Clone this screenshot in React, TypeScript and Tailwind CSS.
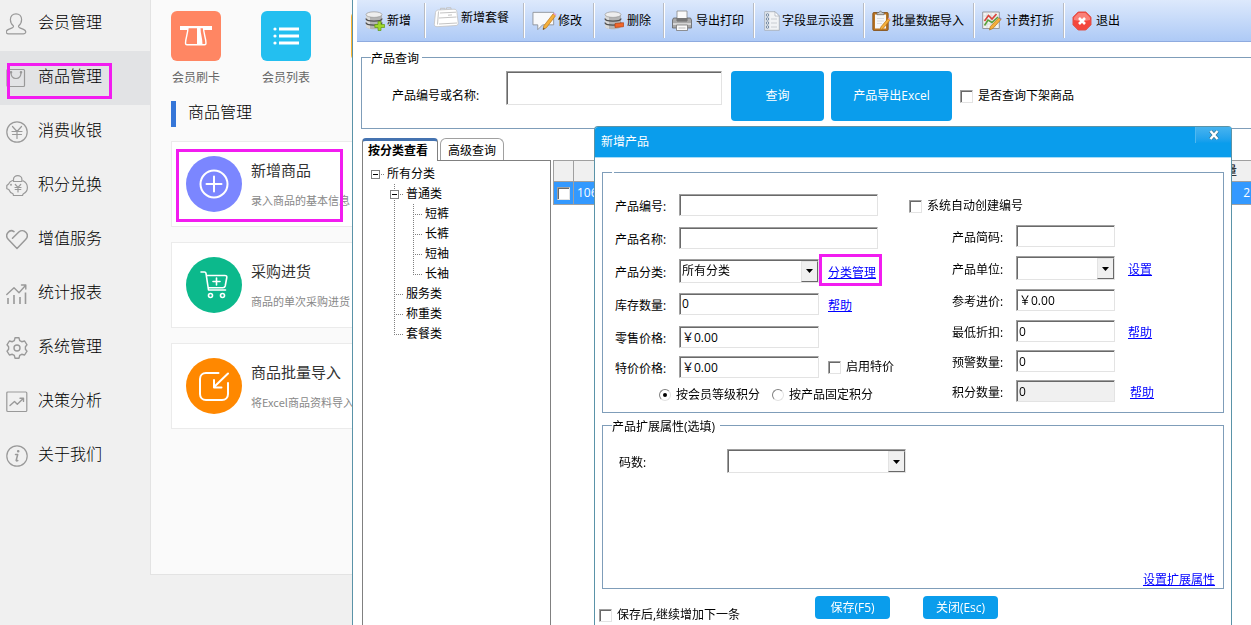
import { useState } from "react";
import type { InputHTMLAttributes, ReactNode, SelectHTMLAttributes } from "react";
import clsx from "clsx";

const INSET =
  "border border-t-[#a0a0a0] border-l-[#a0a0a0] border-r-[#e3e3e3] border-b-[#e3e3e3] shadow-[inset_1px_1px_0_#696969] outline-none";

/* ---------- side menu icons ---------- */

function LineIcon({ children }: { children: ReactNode }) {
  return (
    <svg viewBox="0 0 22 22" className="size-[22px] shrink-0" fill="none" stroke="#999" strokeWidth="1.2" strokeLinecap="round" strokeLinejoin="round" aria-hidden="true">
      {children}
    </svg>
  );
}

const menu = [
  {
    label: "会员管理",
    icon: (
      <path d="M10 .8c3.4 0 5.6 2.400 5.600 5.800 0 2.700-1.300 5-2.900 6.200-.4 1 .1 1.700 1.100 2.100l3.700 1.500c1.700.8 2.500 2.200 2.100 3.200-.3.800-1.200 1.200-2.200 1.200H2.600c-1 0-1.900-.4-2.200-1.200-.4-1 .4-2.400 2.100-3.200l3.700-1.500c1-.4 1.500-1.100 1.100-2.100C5.700 11.600 4.400 9.300 4.400 6.600 4.400 3.200 6.600.8 10 .8z" />
    ),
  },
  {
    label: "商品管理",
    icon: (
      <>
        <rect x="1" y="2.500" width="17.500" height="17" rx="1" />
        <path d="M5 5.500c0 4 2 6 5 6s5-2 5-6" />
        <circle cx="5" cy="5.200" r=".7" />
        <circle cx="15" cy="5.200" r=".7" />
      </>
    ),
  },
  {
    label: "消费收银",
    icon: (
      <>
        <circle cx="11" cy="11" r="10.200" />
        <path d="M6.500 5.500l4.500 5 4.500-5M6 10.500h10M6.500 13.500h9M11 10.500V17.500" />
      </>
    ),
  },
  {
    label: "积分兑换",
    icon: (
      <>
        <path d="M6.500 5.500C4.500 6.300 3.200 7.500 2.600 9L.8 10.500v3.200l2 .8c.7 2 2.200 3.500 4.200 4.300l.5 1.700h9l.6-1.500c2.700-1.300 4.300-3.700 4.300-6.500 0-3-1.700-5.500-4.400-6.800" />
        <path d="M7.500 6.500V4.200a4.200 3.600 0 018.400 0v2.300zM9.300 9.500l2.700 2.800 2.700-2.800M9 12.500h6M9.200 14.500h5.600M12 12.300v4.700" />
        <circle cx="5" cy="9.800" r=".4" />
      </>
    ),
  },
  {
    label: "增值服务",
    icon: (
      <path d="M8 2.600c-2-1.400-4.500-1-6 .8-1.800 2.200-1.500 5.200.4 7.200L11 19.500l8.600-8.900c1.900-2 2.200-5 .4-7.200-1.900-2.100-5-2.300-7.200-.4L6.500 9.200" strokeWidth="1.500" />
    ),
  },
  {
    label: "统计报表",
    icon: (
      <>
        <path d="M.8 11.500L8 4.800l5 5L19.500 2.500M15.500 2h4.300v4" strokeWidth="1.400" />
        <path d="M2 15v6M8 12v9M14 14v7M19.500 9.500V21" strokeWidth="1.600" strokeLinecap="butt" />
      </>
    ),
  },
  {
    label: "系统管理",
    icon: (
      <>
        <path d="M9 .8h4l.7 2.800 2 1.100 2.900-.7 2.400 3.800-1.600 1.900v2.600l1.600 1.900-2.400 3.800-2.900-.7-2 1.100-.7 2.800H9l-.7-2.800-2-1.100-2.900.7L1 14.200l1.600-1.900V9.700L1 7.800 3.400 4l2.900.7 2-1.100z" strokeWidth="1.400" />
        <circle cx="11" cy="11" r="3" strokeWidth="1.400" />
      </>
    ),
  },
  {
    label: "决策分析",
    icon: (
      <>
        <rect x=".8" y="1" width="20" height="19.500" rx="1" />
        <path d="M4 14.500l4.500-4 2.800 2.800L17 7.800M14 7.200h3.500v3.200" strokeWidth="1.400" />
      </>
    ),
  },
  {
    label: "关于我们",
    icon: (
      <>
        <circle cx="11" cy="11" r="10.200" />
        <path d="M9.500 9.500h2.200l-1.500 5.800c-.1.700.5.800 1.600.2" strokeWidth="1.500" />
        <circle cx="12.200" cy="6.300" r=".7" fill="#999" />
      </>
    ),
  },
];

/* ---------- toolbar icons ---------- */

function Database({ badge }: { badge: "add" | "remove" }) {
  return (
    <svg viewBox="0 0 20 20" className="size-5 shrink-0" aria-hidden="true">
      <path d="M1 3.500v12c0 1.500 3.500 2.700 8 2.700s8-1.200 8-2.700v-12z" fill="#b4b4b4" />
      <path d="M1 3.500v12c0 1 1.500 1.900 4 2.400V5z" fill="#d9d9d9" />
      <path d="M1 7.500c0 1.500 3.500 2.600 8 2.600s8-1.100 8-2.600M1 11.600c0 1.500 3.500 2.600 8 2.600s8-1.100 8-2.600" fill="none" stroke="#4f4f4f" strokeWidth="1.300" />
      <ellipse cx="9" cy="3.600" rx="8" ry="2.800" fill="#eee" stroke="#9a9a9a" strokeWidth=".7" />
      {badge === "add" ? (
        <path d="M13 10.500h3v3h3.500v3H16v3h-3v-3H9.800v-3H13z" fill="#9fd62b" stroke="#5d9a12" strokeWidth=".7" />
      ) : (
        <path d="M11 12.500l8.500-.8v4l-8.500.8z" fill="#f0662b" stroke="#b8400f" strokeWidth=".7" />
      )}
    </svg>
  );
}

function Pencil() {
  return (
    <>
      <path d="M22 3.500l2.500 2L15 18l-3.500 2 .8-4z" fill="#f5b03c" stroke="#b87416" strokeWidth=".7" />
      <path d="M22 3.500l1-1.200 2.500 2-1 1.200z" fill="#e7a0cf" />
      <path d="M11.500 20l.4-2 1.400 1.100z" fill="#444" />
    </>
  );
}

const tools = [
  { label: "新增", width: "w-[68px]", gap: "gap-[2px]", icon: <Database badge="add" /> },
  {
    label: "新增套餐",
    width: "w-[99px] pb-[6px]",
    gap: "gap-[2px]",
    icon: (
      <svg viewBox="0 0 26 21" className="h-[21px] w-[26px] shrink-0" aria-hidden="true">
        <path d="M7.500 3V1.300h4.500V3M13.500 2.500V.8H18v1.700" fill="none" stroke="#c4c4c4" />
        <path d="M5.500 3l15.500-.8c1.600 0 2.600.8 2.800 2.300l1.400 11.500c.1 1.500-.8 2.400-2.200 2.500L4 19.700c-1.600 0-2.700-.8-2.700-2.400L2.500 5.500C2.700 4 3.800 3.100 5.500 3z" fill="#fff" stroke="#c2c2c2" strokeWidth=".8" />
        <path d="M5.500 4.500L4.500 17.500M7 6l16-.8M6 11l17.500-1M15 8.200l4-.3M6 17l18-1" fill="none" stroke="#c4c4c4" />
      </svg>
    ),
  },
  {
    label: "修改",
    width: "w-[70px]",
    gap: "gap-px",
    icon: (
      <svg viewBox="0 0 26 22" className="h-[22px] w-[25px] shrink-0" aria-hidden="true">
        <path d="M1 2h21.500v13H11l-5 5v-5H1z" fill="#f8f9fb" stroke="#8b8f96" strokeWidth=".9" />
        <Pencil />
      </svg>
    ),
  },
  { label: "删除", width: "w-[70px] pl-[10px]", gap: "gap-[3px]", icon: <Database badge="remove" /> },
  {
    label: "导出打印",
    width: "w-[90px]",
    gap: "gap-1",
    icon: (
      <svg viewBox="0 0 20 22" className="h-[22px] w-5 shrink-0" aria-hidden="true">
        <path d="M5 1h10v8H5z" fill="#fafafa" stroke="#888" strokeWidth=".8" />
        <path d="M1.500 8h3.500v3h10V8h3.500l1 2v8H.5v-8z" fill="#a9a9a9" stroke="#626262" strokeWidth=".8" />
        <path d="M5 8h10v3H5z" fill="#777" />
        <path d="M1 13h18v2H1z" fill="#d5d5d5" />
        <path d="M4.500 15h11v5.500h-11z" fill="#fafafa" stroke="#777" strokeWidth=".8" />
        <path d="M6.500 18h7" stroke="#bbb" />
      </svg>
    ),
  },
  {
    label: "字段显示设置",
    width: "w-[110px] pl-[10px]",
    gap: "gap-[2px]",
    icon: (
      <svg viewBox="0 0 16 20" className="h-5 w-4 shrink-0" aria-hidden="true">
        <path d="M.7.700h10.300l4.300 4.300v14.300H.7z" fill="#f1f3f5" stroke="#a4abb3" strokeWidth=".8" />
        <path d="M11 .7V5h4.300z" fill="#fff" stroke="#9aa3ad" strokeWidth=".6" />
        <path d="M1 1h4.500v18H1z" fill="#dbe1e8" />
        <g fill="#fff" stroke="#56708f" strokeWidth=".8">
          <circle cx="3.500" cy="4" r="1.200" />
          <circle cx="3.500" cy="8" r="1.200" />
          <circle cx="3.500" cy="12" r="1.200" />
          <circle cx="3.500" cy="16" r="1.200" />
        </g>
        <path d="M7 8h6M7 12h6M7 16h6" stroke="#c9cdd2" />
      </svg>
    ),
  },
  {
    label: "批量数据导入",
    width: "w-[110px]",
    gap: "gap-px",
    icon: (
      <svg viewBox="0 0 19 22" className="h-[22px] w-[19px] shrink-0" aria-hidden="true">
        <rect x=".8" y="2.500" width="15.400" height="18" rx="1.200" fill="#b97424" stroke="#7f4a10" strokeWidth=".8" />
        <path d="M3 4.500h11v14H3z" fill="#f7f8fa" />
        <path d="M5 4.700V2.500h2L8.500.8 10 2.500h2v2.200z" fill="#c9ccd0" stroke="#666" strokeWidth=".7" />
        <path d="M5 8.500h7M5 11h7M5 13.500h5" stroke="#d0d3d8" strokeWidth=".8" />
        <path d="M16 8.500l2 1.600-7 8.600-2.800 1.300.6-3z" fill="#f5b03c" stroke="#b87416" strokeWidth=".7" />
        <path d="M16 8.500l.9-1.100 2 1.600-.9 1.100z" fill="#e7a0cf" />
      </svg>
    ),
  },
  {
    label: "计费打折",
    width: "w-[90px]",
    gap: "gap-1",
    icon: (
      <svg viewBox="0 0 20 20" className="size-5 shrink-0" aria-hidden="true">
        <path d="M.7 1h16.600v16.500H.7z" fill="#f3f3f1" stroke="#8d9094" strokeWidth=".9" />
        <path d="M1 5h16M1 9h16M1 13h16M5 1v16M9 1v16M13 1v16" stroke="#cfd2d5" strokeWidth=".7" />
        <path d="M2.500 10l4-5.500L10 8l4.500-5" fill="none" stroke="#d8443a" strokeWidth="1.600" />
        <path d="M2.500 14.500L6 9l4 2.500L16 6" fill="none" stroke="#58a03c" strokeWidth="1.600" />
        <path d="M16.800 6.800l2.200 1.700-8.200 9-3.300 1.500.8-3.400z" fill="#f5b03c" stroke="#b87416" strokeWidth=".7" />
        <path d="M16.800 6.800l.7-.8 2.200 1.700-.7.8z" fill="#8c7fc0" />
      </svg>
    ),
  },
  {
    label: "退出",
    width: "w-[70px]",
    gap: "gap-1",
    icon: (
      <svg viewBox="0 0 20 20" className="size-5 shrink-0" aria-hidden="true">
        <path d="M6.200 1h7.600L19 6.200v7.600L13.800 19H6.200L1 13.800V6.200z" fill="#f4473d" stroke="#e05048" strokeLinejoin="round" />
        <path d="M6.500 2h7L18 6.500V9c-5 1.500-11 1.500-16 0V6.500z" fill="#fb8f87" opacity=".8" />
        <path d="M7 7l6 6M13 7l-6 6" stroke="#fff" strokeWidth="2.600" />
      </svg>
    ),
  },
];

const cards = [
  {
    title: "新增商品",
    desc: "录入商品的基本信息",
    color: "bg-[#7b86ff]",
    marked: true,
    icon: (
      <>
        <circle cx="15" cy="15" r="13.500" />
        <path d="M15 7.500v15M7.500 15h15" />
      </>
    ),
  },
  {
    title: "采购进货",
    desc: "商品的单次采购进货",
    color: "bg-[#0cb98c]",
    icon: (
      <>
        <path d="M2 2h3.500c1 0 1.300.5 1.500 1.300L9.500 20h17M7.300 5.500h18.500c1.700 0 2.200.8 2 2l-1.600 8.500c-.3 1.200-1 1.700-2.200 1.700H9.200M17.500 8v7M14 11.500h7" strokeWidth="1.600" />
        <circle cx="11.500" cy="25.500" r="2" strokeWidth="1.600" />
        <circle cx="23.500" cy="25.500" r="2" strokeWidth="1.600" />
      </>
    ),
  },
  {
    title: "商品批量导入",
    desc: "将Excel商品资料导入",
    color: "bg-[#ff8800]",
    icon: (
      <path d="M19.500 2H7C3.500 2 1 4.500 1 8v15c0 3.500 2.500 6 6 6h16c3.500 0 6-2.500 6-6V12M29 2.500L15 16M15 9v7.500h7.500" />
    ),
  },
];

/* ---------- form parts ---------- */

function TextBox({ className, ...rest }: InputHTMLAttributes<HTMLInputElement>) {
  return <input type="text" className={clsx(INSET, "h-[22px] shrink-0 px-[2px] disabled:bg-[#f0f0f0] disabled:text-black", className)} {...rest} />;
}

function DropDown({ className, children, ...rest }: SelectHTMLAttributes<HTMLSelectElement>) {
  return (
    <span className={clsx("relative h-6 shrink-0", className)}>
      <select className={clsx(INSET, "h-6 w-full appearance-none bg-white pr-5 pl-[2px]")} {...rest}>
        {children}
      </select>
      <span className="pointer-events-none absolute top-[2px] right-[1px] bottom-[1px] flex w-[17px] items-center justify-center border border-t-[#e3e3e3] border-r-[#696969] border-b-[#696969] border-l-[#e3e3e3] bg-[#f0f0f0]">
        <svg viewBox="0 0 7 4" className="h-1 w-[7px]" aria-hidden="true">
          <path d="M0 0h7L3.500 4z" />
        </svg>
      </span>
    </span>
  );
}

function CheckBox({ children, className }: { children: ReactNode; className?: string }) {
  return (
    <label className={clsx("flex items-center gap-[5px] whitespace-nowrap", className)}>
      <input type="checkbox" className={clsx(INSET, "size-[13px] shrink-0 appearance-none bg-white checked:bg-[#0a9dec]")} />
      {children}
    </label>
  );
}

function Radio({ children, ...rest }: InputHTMLAttributes<HTMLInputElement>) {
  return (
    <label className="flex items-center gap-[5px] whitespace-nowrap">
      <span className="relative size-3">
        <input type="radio" className="peer block size-3 appearance-none rounded-full border border-t-[#808080] border-r-[#e3e3e3] border-b-[#e3e3e3] border-l-[#808080] bg-white" {...rest} />
        <span className="absolute top-1 left-1 hidden size-1 rounded-full bg-black peer-checked:block" />
      </span>
      {children}
    </label>
  );
}

function Row({ label, id, className, children }: { label: string; id: string; className?: string; children: ReactNode }) {
  return (
    <div className={clsx("flex items-center", className)}>
      <label htmlFor={id} className="w-16 shrink-0 pt-1 whitespace-nowrap">
        {label}:
      </label>
      {children}
    </div>
  );
}

function TextLink({ children, className }: { children: ReactNode; className?: string }) {
  return (
    <a href="#" className={clsx("whitespace-nowrap text-[#0000ff] underline", className)}>
      {children}
    </a>
  );
}

function Marker({ className }: { className: string }) {
  return <span className={clsx("pointer-events-none absolute border-3 border-[#f21cf0]", className)} />;
}

/* ---------- category tree ---------- */

type TreeNode = { name: string; children?: TreeNode[] };

const categories: TreeNode = {
  name: "所有分类",
  children: [
    { name: "普通类", children: [{ name: "短裤" }, { name: "长裤" }, { name: "短袖" }, { name: "长袖" }] },
    { name: "服务类" },
    { name: "称重类" },
    { name: "套餐类" },
  ],
};

function Branch({ node }: { node: TreeNode }) {
  const [open, setOpen] = useState(true);
  return (
    <li className="relative pl-3">
      <span className="absolute top-[10px] left-0 w-[9px] border-t border-dotted border-[#808080]" />
      {node.children && (
        <button
          type="button"
          aria-label={node.name}
          onClick={() => setOpen(!open)}
          className="absolute top-[6px] left-[-4px] z-10 flex size-[9px] items-center justify-center border border-[#808080] bg-white"
        >
          <span className="h-px w-[5px] bg-black" />
        </button>
      )}
      <span className="block h-5 leading-5">{node.name}</span>
      {node.children && open && (
        <ul className="relative ml-[7px] before:absolute before:top-0 before:bottom-[9px] before:left-0 before:border-l before:border-dotted before:border-[#808080]">
          {node.children.map((c) => (
            <Branch key={c.name} node={c} />
          ))}
        </ul>
      )}
    </li>
  );
}

/* ---------- new product dialog ---------- */

function ProductDialog() {
  return (
    <form
      role="dialog"
      aria-label="新增产品"
      className="absolute top-[126px] right-[19px] bottom-0 left-[241px] flex flex-col rounded-t border border-b-0 border-[#5a93a8] bg-white"
    >
      <header className="flex h-[31px] shrink-0 items-center justify-between rounded-t-[3px] border-b border-[#a8dcf8] bg-[#0a9dec] pl-[6px] text-white">
        <h2>新增产品</h2>
        <button type="button" aria-label="关闭窗口" className="flex h-4 w-9 items-center justify-center self-start border-l border-[#4fb8f0] bg-gradient-to-b from-[#45b3ef] to-[#0a9dec]">
          <svg viewBox="0 0 12 10" className="h-[10px] w-3" aria-hidden="true">
            <path d="M2.500 1l7 8M9.500 1l-7 8" stroke="#3c7896" strokeWidth="3.800" />
            <path d="M2.500 1l7 8M9.500 1l-7 8" stroke="#fff" strokeWidth="2.400" />
          </svg>
        </button>
      </header>

      <fieldset className="mx-[7px] mt-[14px] border border-[#7f9db9]">
        <legend className="ml-[9px] h-px w-[2px]" />
        <div className="flex pt-[15px] pb-[3px]">
          <div className="w-[306px] shrink-0 pl-3">
            <Row label="产品编号" id="code" className="h-[33px]">
              <TextBox id="code" autoFocus className="w-[199px]" />
            </Row>
            <Row label="产品名称" id="name" className="h-[33px]">
              <TextBox id="name" className="w-[199px]" />
            </Row>
            <Row label="产品分类" id="category" className="h-[33px]">
              <DropDown id="category" className="w-[140px]">
                <option>所有分类</option>
              </DropDown>
              <span className="relative ml-[9px] pt-1">
                <TextLink>分类管理</TextLink>
                <Marker className="-top-[7px] -right-[6px] -bottom-[5px] -left-[9px]" />
              </span>
            </Row>
            <Row label="库存数量" id="stock" className="h-[33px]">
              <TextBox id="stock" defaultValue="0" className="w-[140px]" />
              <TextLink className="ml-[9px] pt-1">帮助</TextLink>
            </Row>
            <Row label="零售价格" id="retail" className="h-[33px]">
              <TextBox id="retail" defaultValue="￥0.00" className="w-[140px]" />
            </Row>
            <Row label="特价价格" id="special" className="h-[28px]">
              <TextBox id="special" defaultValue="￥0.00" className="w-[140px]" />
              <CheckBox className="ml-[9px]">启用特价</CheckBox>
            </Row>
            <div className="flex h-[28px] items-center gap-3 pl-11">
              <Radio name="points" defaultChecked>
                按会员等级积分
              </Radio>
              <Radio name="points">按产品固定积分</Radio>
            </div>
          </div>

          <div className="flex-1">
            <CheckBox className="h-8 pt-1">系统自动创建编号</CheckBox>
            <div className="pl-[43px]">
              <Row label="产品简码" id="short" className="h-8">
                <TextBox id="short" className="w-[99px]" />
              </Row>
              <Row label="产品单位" id="unit" className="h-8">
                <DropDown id="unit" className="w-[99px]" />
                <TextLink className="ml-[13px] pt-1">设置</TextLink>
              </Row>
              <Row label="参考进价" id="cost" className="h-8">
                <TextBox id="cost" defaultValue="￥0.00" className="w-[99px]" />
              </Row>
              <Row label="最低折扣" id="discount" className="h-[30px]">
                <TextBox id="discount" defaultValue="0" className="w-[99px]" />
                <TextLink className="ml-[13px] pt-1">帮助</TextLink>
              </Row>
              <Row label="预警数量" id="alert" className="h-[30px]">
                <TextBox id="alert" defaultValue="0" className="w-[99px]" />
              </Row>
              <Row label="积分数量" id="score" className="h-[30px]">
                <TextBox id="score" defaultValue="0" disabled className="w-[99px]" />
                <TextLink className="ml-[15px] pt-1">帮助</TextLink>
              </Row>
            </div>
          </div>
        </div>
      </fieldset>

      <fieldset className="mx-[7px] mt-[2px] flex-1 border border-[#7f9db9]">
        <legend className="ml-[9px] pt-1 pr-[5px] leading-4">产品扩展属性(选填)</legend>
        <div className="flex h-full flex-col justify-between pt-[14px]">
          <div className="flex items-center pl-4">
            <label htmlFor="size" className="w-[108px] pt-1">
              码数:
            </label>
            <DropDown id="size" className="w-[179px]" />
          </div>
          <TextLink className="mr-2 self-end">设置扩展属性</TextLink>
        </div>
      </fieldset>

      <footer className="flex h-9 shrink-0 items-start pl-1 text-white">
        <CheckBox className="mt-[18px] w-[216px] text-black">保存后,继续增加下一条</CheckBox>
        <button type="submit" className="mt-[7px] h-[23px] w-[75px] rounded bg-[#0a9dec]">
          保存(F5)
        </button>
        <button type="button" className="mt-[7px] ml-[33px] h-[23px] w-[75px] rounded bg-[#0a9dec]">
          关闭(Esc)
        </button>
      </footer>
    </form>
  );
}

export default function App() {
  return (
    <div className="flex h-screen overflow-hidden bg-[#f0f0f0] font-['Open_Sans','Noto_Sans_CJK_SC',sans-serif] text-xs leading-4 text-black">
      {/* Side menu */}
      <nav className="w-[150px] shrink-0">
        <ul className="-mt-[3px]">
          {menu.map((m) => (
            <li key={m.label} className={clsx("relative", m.label === "商品管理" && "bg-[#e2e3e5]")}>
              <a href="#" className="flex h-[54px] items-center gap-[10px] pl-[6px] text-base font-light">
                <LineIcon>{m.icon}</LineIcon>
                <span className="pb-1">{m.label}</span>
              </a>
              {m.label === "商品管理" && <Marker className="top-3 left-[7px] h-9 w-[105px]" />}
            </li>
          ))}
        </ul>
      </nav>

      {/* Shortcut panel */}
      <section className="mb-[50px] w-[202px] shrink-0 overflow-hidden border-b border-l border-[#e3e3e3] bg-[#fafafa] pt-[11px] pl-5">
        <div className="flex gap-10 text-[#666]">
          <a href="#" className="w-[50px] shrink-0 text-center">
            <span className="mb-[9px] flex size-[50px] items-center justify-center rounded-md bg-[#ff8663]">
              <svg viewBox="0 0 32 20" className="h-5 w-8" aria-hidden="true">
                <path d="M0 0h32v4H0z" fill="#fff" />
                <path d="M8 1.500C8 8 5.500 12 5.500 17.200c0 1 .5 1.500 1.500 1.500h17.500c1 0 1.500-.5 1.500-1.500C26 12 23.500 8 23.500 1.500z" fill="#ff8663" stroke="#fff" strokeWidth="1.400" />
                <path d="M17 2h3.500c0 6 2 10 2 16.500H17z" fill="#fff" />
              </svg>
            </span>
            会员刷卡
          </a>
          <a href="#" className="w-[50px] shrink-0 text-center">
            <span className="mb-[9px] flex size-[50px] items-center justify-center rounded-md bg-[#23bff0]">
              <svg viewBox="0 0 26 18" className="h-[18px] w-[26px]" fill="#fff" aria-hidden="true">
                <circle cx="2" cy="2" r="1.600" />
                <circle cx="2" cy="9" r="1.600" />
                <circle cx="2" cy="16" r="1.600" />
                <path d="M6 .5h20v3H6zM6 7.500h20v3H6zM6 14.500h20v3H6z" />
              </svg>
            </span>
            会员列表
          </a>
          <span className="size-[50px] shrink-0 rounded-md bg-[#ffb52e]" />
        </div>

        <h2 className="mt-[15px] mb-[14px] flex h-[26px] items-center border-l-[5px] border-[#3576d8] pl-3 text-base font-light">
          <span className="pb-1">商品管理</span>
        </h2>

        {cards.map((c) => (
          <a key={c.title} href="#" className="relative mb-[15px] flex h-[86px] w-[260px] items-center gap-[9px] border border-[#ebebeb] bg-white pl-[14px] whitespace-nowrap">
            <span className={clsx("flex size-14 items-center justify-center rounded-full", c.color)}>
              <svg viewBox="0 0 30 30" className="size-[30px]" fill="none" stroke="#fff" strokeWidth="2" strokeLinecap="round" strokeLinejoin="round" aria-hidden="true">
                {c.icon}
              </svg>
            </span>
            <span className="flex flex-col gap-[14px] pt-[2px]">
              <span className="text-[15px] text-[#333]">{c.title}</span>
              <span className="font-['Noto_Sans_CJK_SC',sans-serif] text-[11px] text-[#888]">{c.desc}</span>
            </span>
            {c.marked && <Marker className="top-[7px] left-1 h-[73px] w-[167px]" />}
          </a>
        ))}
      </section>

      {/* Product window */}
      <main className="relative flex min-w-0 flex-1 flex-col border-l border-[#5a93a8] bg-white">
        <div role="toolbar" className="ml-1 flex h-[42px] shrink-0 border-b border-[#8fabdf] bg-gradient-to-b from-[#dde9fc] to-[#aecaf6]">
          {tools.map((t) => (
            <button
              key={t.label}
              type="button"
              className={clsx(
                "my-[3px] flex shrink-0 items-center pl-2 whitespace-nowrap not-last:border-r not-last:border-[#b8bcc4] not-last:shadow-[1px_0_0_#fff]",
                t.width,
                t.gap
              )}
            >
              {t.icon}
              {t.label}
            </button>
          ))}
        </div>

        <fieldset className="mt-[5px] ml-2 border border-r-0 border-[#7f9db9]">
          <legend className="ml-[9px] pt-1 pr-[3px]">产品查询</legend>
          <div className="flex items-start pt-1 pb-[7px] pl-[30px] whitespace-nowrap">
            <label htmlFor="keyword" className="w-[114px] shrink-0 self-center">
              产品编号或名称:
            </label>
            <TextBox id="keyword" className="h-[34px] w-[216px]" />
            <button type="button" className="ml-[9px] h-[50px] w-[93px] shrink-0 rounded bg-[#0a9dec] text-white">
              查询
            </button>
            <button type="button" className="ml-[7px] h-[50px] w-[121px] shrink-0 rounded bg-[#0a9dec] text-white">
              产品导出Excel
            </button>
            <CheckBox className="ml-2 self-center">是否查询下架商品</CheckBox>
          </div>
        </fieldset>

        <div className="mt-[9px] ml-[9px] flex flex-1 gap-[2px]">
          <div className="flex w-[189px] shrink-0 flex-col">
            <div role="tablist" className="flex gap-[2px]">
              <button type="button" role="tab" aria-selected="true" className="relative -mb-px h-[23px] w-[76px] rounded-t border-t-3 border-r border-l border-t-[#4573b0] border-r-[#808080] border-l-[#808080] bg-white pr-1 font-bold">
                按分类查看
              </button>
              <button type="button" role="tab" aria-selected="false" className="h-[22px] w-16 rounded-t-md border border-b-0 border-[#a0a0a0] pt-[2px]">
                高级查询
              </button>
            </div>
            <div className="flex-1 border border-b-0 border-[#808080] pt-[3px]">
              <ul className="ml-3">
                <Branch node={categories} />
              </ul>
            </div>
          </div>

          <table className="mt-[22px] h-11 flex-1 table-fixed border-collapse self-start">
            <thead>
              <tr className="h-[21px] border border-r-0 border-[#a0a0a0] bg-[#f0f0f0]">
                <th className="w-5 border-r border-[#a0a0a0]" aria-label="选择" />
                <th aria-label="编号" />
                <th className="w-[60px] pr-[14px] text-right font-normal">数量</th>
              </tr>
            </thead>
            <tbody>
              <tr className="h-[23px] border border-r-0 border-[#a0a0a0] bg-[#3399ff] text-white">
                <td className="border-r border-[#a0a0a0] pl-[3px]">
                  <input type="checkbox" aria-label="选择产品" className={clsx(INSET, "block size-[13px] appearance-none bg-white")} />
                </td>
                <td className="pl-[3px]">106</td>
                <td className="pr-[1px] text-right">2</td>
              </tr>
            </tbody>
          </table>
        </div>

        <ProductDialog />
      </main>
    </div>
  );
}
